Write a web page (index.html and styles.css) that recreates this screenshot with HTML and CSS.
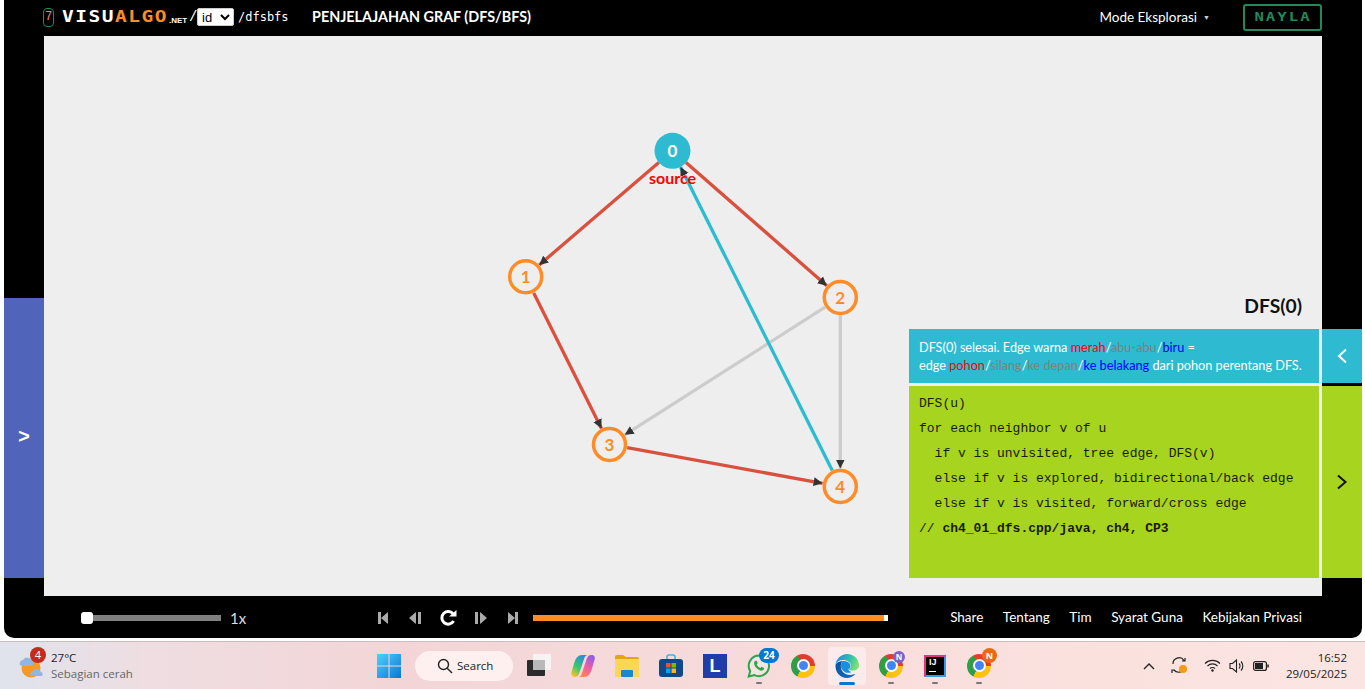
FILE: index.html
```html
<!DOCTYPE html>
<html lang="id">
<head>
<meta charset="utf-8">
<title>VisuAlgo - DFS/BFS</title>
<link rel="stylesheet" href="styles.css">
</head>
<body>
<div class="app">
  <header class="top">
    <span class="ver">7</span>
    <a class="logo"><span class="logo-in"><span class="w">VISU</span><span class="o">ALGO</span></span></a>
    <span class="net">.NET</span>
    <span class="slash">/</span>
    <select class="lang"><option>id</option></select>
    <span class="path">/dfsbfs</span>
    <span class="title">PENJELAJAHAN GRAF (DFS/BFS)</span>
    <span class="mode">Mode Eksplorasi</span>
    <span class="caret">▼</span>
    <span class="user"><span class="user-in">NAYLA</span></span>
  </header>
  <div class="middle">
    <div class="side-left"><div class="open-panel">&gt;</div></div>
    <main class="canvas">
      <svg class="graph" width="1278" height="560" viewBox="44 36 1278 560">
        <defs>
          <marker id="arrow" markerUnits="userSpaceOnUse" markerWidth="11" markerHeight="11" refX="9" refY="5.500" orient="auto">
            <path d="M0 1 L9 5.500 L0 10 Z" fill="#333"/>
          </marker>
        </defs>
        <g class="edges">
          <line class="e red" x1="658.8" y1="162.5" x2="539.2" y2="265"/>
          <line class="e red" x1="686" y1="162.6" x2="826.8" y2="285.7"/>
          <line class="e red" x1="533.7" y1="293" x2="601.5" y2="428.4"/>
          <line class="e grey" x1="825.1" y1="307.2" x2="624.7" y2="434.8"/>
          <line class="e grey" x1="840.3" y1="315.5" x2="840.3" y2="468.5"/>
          <line class="e red" x1="627.2" y1="447.7" x2="822.6" y2="483.3"/>
          <line class="e blue" x1="832.3" y1="470.4" x2="680.5" y2="166.9"/>
        </g>
        <circle class="n on" cx="672.5" cy="150.8" r="18"/>
        <circle class="n" cx="525.7" cy="276.7" r="16"/>
        <circle class="n" cx="840.3" cy="297.5" r="16"/>
        <circle class="n" cx="609.5" cy="444.5" r="16"/>
        <circle class="n" cx="840.3" cy="486.5" r="16"/>
        <text class="nt white" x="672.5" y="156.5">0</text>
        <text class="nt" x="525.7" y="282.5">1</text>
        <text class="nt" x="840.3" y="303.500">2</text>
        <text class="nt" x="609.5" y="450.500">3</text>
        <text class="nt" x="840.3" y="492.500">4</text>
        <text class="src" x="672.5" y="183.5">source</text>
      </svg>
      <h2 class="algo">DFS(0)</h2>
      <section class="panel">
        <div class="status">DFS(0) selesai. Edge warna <span class="c-r">merah</span>/<span class="c-g">abu-abu</span>/<span class="c-b">biru</span> =<br>edge <span class="c-r">pohon</span>/<span class="c-g">silang</span>/<span class="c-g">ke depan</span>/<span class="c-b">ke belakang</span> dari pohon perentang DFS.</div>
        <div class="code">
          <div>DFS(u)</div>
          <div>for each neighbor v of u</div>
          <div class="in">if v is unvisited, tree edge, DFS(v)</div>
          <div class="in">else if v is explored, bidirectional/back edge</div>
          <div class="in">else if v is visited, forward/cross edge</div>
          <div>// <b>ch4_01_dfs.cpp/java, ch4, CP3</b></div>
        </div>
      </section>
    </main>
    <div class="side-right">
      <div class="tab tab-blue"><svg width="12" height="16" viewBox="0 0 12 16"><path d="M10 1.500 L3 8 L10 14.500" fill="none" stroke="#fff" stroke-width="2"/></svg></div>
      <div class="tab tab-green"><svg width="12" height="16" viewBox="0 0 12 16"><path d="M2 1.500 L9.500 8 L2 14.500" fill="none" stroke="#111" stroke-width="2"/></svg></div>
    </div>
  </div>
  <footer class="bottom">
    <div class="speed"><div class="track"><span class="thumb"></span></div><span class="rate">1x</span></div>
    <div class="ctrl">
      <svg width="12" height="14" viewBox="0 0 12 14"><path d="M1 1h3v12H1zM11 1v12L4 7z" fill="#aaa"/></svg>
      <svg width="12" height="14" viewBox="0 0 12 14"><path d="M7 1v12L0 7zM9 1h3v12H9z" fill="#aaa"/></svg>
      <svg width="18" height="18" viewBox="0 0 18 18"><path d="M14.300 5.200A6.300 6.300 0 1 0 14.600 12" fill="none" stroke="#fff" stroke-width="3"/><path d="M10 7.500h7.500V1z" fill="#fff"/></svg>
      <svg width="12" height="14" viewBox="0 0 12 14"><path d="M0 1h3v12H0zM5 1v12l7-6z" fill="#aaa"/></svg>
      <svg width="12" height="14" viewBox="0 0 12 14"><path d="M1 1v12l7-6zM8 1h3v12H8z" fill="#aaa"/></svg>
    </div>
    <div class="progress"><span class="tick"></span></div>
    <nav class="links"><a>Share</a><a>Tentang</a><a>Tim</a><a>Syarat Guna</a><a>Kebijakan Privasi</a></nav>
  </footer>
</div>

<div class="taskbar">
  <div class="weather">
    <svg class="sun" width="26" height="26" viewBox="0 0 26 26">
      <circle cx="13" cy="15" r="9.500" fill="#f59a23"/>
      <path d="M2 12a3.500 3.500 0 0 1 3-5 5 5 0 0 1 9 1 3 3 0 0 1 0 5H4z" fill="#8fb6e6"/>
      <path d="M13 23a3 3 0 0 1 2-5 4.500 4.500 0 0 1 8 1 2.400 2.400 0 0 1 1 4z" fill="#8fb6e6"/>
    </svg>
    <span class="wbadge">4</span>
    <div class="wtext"><div>27°C</div><div class="wsub">Sebagian cerah</div></div>
  </div>
  <div class="apps">
    <div class="slot"><svg width="24" height="24" viewBox="0 0 24 24"><defs><linearGradient id="win" x1="0" y1="0" x2="1" y2="1"><stop offset="0" stop-color="#4fd0fb"/><stop offset="1" stop-color="#0b76d1"/></linearGradient></defs><path d="M0 0h11.500v11.500H0zM12.500 0H24v11.500H12.500zM0 12.500h11.500V24H0zM12.500 12.500H24V24H12.500z" fill="url(#win)"/></svg></div>
    <div class="search"><svg width="16" height="16" viewBox="0 0 16 16"><circle cx="6.500" cy="6.500" r="5" fill="none" stroke="#222" stroke-width="1.400"/><path d="M10.200 10.200L15 15" stroke="#222" stroke-width="1.400"/></svg><span>Search</span></div>
    <div class="slot tv"><svg width="24" height="24" viewBox="0 0 24 24"><rect x="0" y="6" width="18" height="16" rx="1" fill="#2b2b2b"/><rect x="6" y="0" width="18" height="16" rx="1" fill="#f7f4f4" opacity=".95"/><rect x="6" y="6" width="12" height="10" fill="#b9b9b9"/></svg></div>
    <div class="slot"><svg width="24" height="22" viewBox="0 0 24 22"><defs><linearGradient id="cop1" x1=".2" y1="1" x2=".8" y2="0"><stop offset="0" stop-color="#f7c531"/><stop offset=".4" stop-color="#38c96a"/><stop offset="1" stop-color="#2a86e8"/></linearGradient><linearGradient id="cop2" x1=".2" y1="1" x2=".8" y2="0"><stop offset="0" stop-color="#8a5cf0"/><stop offset=".5" stop-color="#ee5ca8"/><stop offset="1" stop-color="#f78c4a"/></linearGradient></defs><path d="M11 0h5.500c-1.500 0-2.500 1-3.500 4L9 16c-1 3-2 6-5 6H3c-2 0-3.500-2-2.500-5l3-10C5 3 7 0 11 0z" fill="url(#cop1)"/><path d="M11 0h5.500c-1.500 0-2.500 1-3.500 4L9 16c-1 3-2 6-5 6H3c-2 0-3.500-2-2.500-5l3-10C5 3 7 0 11 0z" fill="url(#cop2)" transform="rotate(180 12 11)"/></svg></div>
    <div class="slot"><svg width="24" height="22" viewBox="0 0 24 22"><path d="M0 2q0-2 2-2h6l3 2h11q2 0 2 2v2H0z" fill="#e5a50d"/><path d="M0 4h24v18H0z" fill="#fcd656"/><rect x="6" y="15" width="12" height="7" rx="1" fill="#1c86cf"/></svg></div>
    <div class="slot"><svg width="24" height="24" viewBox="0 0 24 24"><path d="M8 5V3q0-2 2-2h4q2 0 2 2v2" fill="none" stroke="#39b6ea" stroke-width="1.600"/><rect y="5" width="24" height="18" rx="3" fill="#10498a"/><path d="M7 9h4.500v4.500H7z" fill="#f25022"/><path d="M12.500 9H17v4.500h-4.500z" fill="#7fba00"/><path d="M7 14.500h4.500V19H7z" fill="#00a4ef"/><path d="M12.500 14.500H17V19h-4.500z" fill="#ffb900"/></svg></div>
    <div class="slot"><span class="lapp">L</span></div>
    <div class="slot"><svg width="24" height="24" viewBox="0 0 24 24"><path d="M12 1.500a10.300 10.300 0 0 0-8.800 15.600L1.700 22.500l5.600-1.400A10.300 10.300 0 1 0 12 1.500z" fill="#f4e3e0" stroke="#2aa64a" stroke-width="2"/><path d="M8 7c-1.500 1.500-1 4 1 6.500s5 3.500 6.500 3c1.500-.5 2-2 1.500-2.500l-2.500-1.200-1 1.200c-1 0-3.500-2.300-3.800-3.700l1-1-1-2.500z" fill="#2aa64a"/></svg><span class="bdg b24">24</span><i class="dot"></i></div>
    <div class="slot"><span class="chrome"></span></div>
    <div class="slot active"><svg width="24" height="24" viewBox="0 0 24 24"><defs><linearGradient id="edgeA" x1="0" y1=".3" x2="1" y2=".6"><stop offset="0" stop-color="#1a8fdc"/><stop offset=".55" stop-color="#2fc0b0"/><stop offset="1" stop-color="#86e36c"/></linearGradient><linearGradient id="edgeB" x1="0" y1="0" x2=".7" y2="1"><stop offset="0" stop-color="#0a4f99"/><stop offset="1" stop-color="#0d6fc4"/></linearGradient></defs><path d="M.5 11C1 5 6 0 12 0c7 0 12 5 12 11.500 0 3.500-3 5-5.500 5s-4.500-.5-5-1.500c2.500-1 3-3 2-5C14.500 7.500 11 6 8 6c-4 0-6.500 2-7.500 5z" fill="url(#edgeA)"/><path d="M.5 11C2 8 5 7 8 7c-2 1-2.500 4-2 7 1 5 6 8 12 6.500l2.500-.5C18 22.500 15 24 12 24 5 24 0 18 .5 11z" fill="url(#edgeB)"/><path d="M8 7c3-.5 6 1 7 3s.5 4-1.500 5c-.5 1 1 2.500 3 3-3 1.500-6 1-8-1-2-2-3-4-2.500-6.500C6.200 8.700 7 7.500 8 7z" fill="#1c8fdc"/></svg><i class="bar"></i></div>
    <div class="slot"><span class="chrome"></span><span class="bdg bn">N</span><i class="dot"></i></div>
    <div class="slot"><span class="ij"><b>IJ</b></span><i class="dot"></i></div>
    <div class="slot"><span class="chrome"></span><span class="bdg bo">N</span><i class="dot"></i></div>
  </div>
  <div class="tray">
    <svg width="12" height="8" viewBox="0 0 12 8"><path d="M1 7L6 2l5 5" fill="none" stroke="#222" stroke-width="1.400"/></svg>
    <svg class="t2" width="17" height="17" viewBox="0 0 17 17"><path d="M2 7A6 6 0 0 1 13 3.500M14 1v3h-3M13 12A6 6 0 0 1 3 13M1 16v-3h3" fill="none" stroke="#222" stroke-width="1.200"/><circle cx="12" cy="12" r="4" fill="#f59a12"/></svg>
    <svg class="t2" width="17" height="13" viewBox="0 0 17 13"><path d="M1 4.500a10.500 10.500 0 0 1 15 0M3.500 7a7 7 0 0 1 10 0M6 9.500a3.500 3.500 0 0 1 5 0" fill="none" stroke="#222" stroke-width="1.100"/><circle cx="8.500" cy="11.500" r="1.200" fill="#222"/></svg>
    <svg class="t1" width="16" height="14" viewBox="0 0 16 14"><path d="M1 4.500h2.500L7.500 1v12L3.500 9.500H1z" fill="none" stroke="#222" stroke-width="1.100"/><path d="M10 4.500a3.500 3.500 0 0 1 0 5M12 2.500a6.500 6.500 0 0 1 0 9" fill="none" stroke="#222" stroke-width="1.100"/></svg>
    <svg class="t1" width="16" height="10" viewBox="0 0 16 10"><rect x=".6" y=".6" width="12.800" height="8.800" rx="2" fill="none" stroke="#222" stroke-width="1.200"/><rect x="2" y="2" width="8" height="6" fill="#222"/><rect x="14.300" y="3.500" width="1.500" height="3" fill="#222"/></svg>
    <div class="clock"><div>16:52</div><div>29/05/2025</div></div>
  </div>
</div>
</body>
</html>
```
FILE: styles.css
```css
* { box-sizing: border-box; }
html, body { margin: 0; height: 689px; overflow: hidden; background: #fff; }
body { font-family: Lato, "Noto Sans", sans-serif; }

.app { width: 1358px; height: 638px; margin-left: 4px; background: #000; border-radius: 0 0 10px 10px; display: flex; flex-direction: column; overflow: hidden; color: #fff; }

.top { height: 36px; flex: none; display: flex; align-items: center; padding: 0 40px 2px 39px; }
.ver { width: 11px; height: 19px; border: 1px solid #1f8a5a; border-radius: 4px; color: #ff8c27; font: 12px/17px "Liberation Mono", monospace; text-align: center; }
.logo { margin-left: 8px; width: 107px; font: 15px/1 "DejaVu Sans Mono", monospace; white-space: nowrap; }
.logo-in { display: inline-block; letter-spacing: 1.16px; transform: scaleX(1.3); transform-origin: 0 50%; font-weight: 700; }
.logo .o { color: #ff8c27; }
.net { font: bold 8px/1 "Liberation Sans", sans-serif; margin-top: 7px; width: 20px; }
.slash { font: 14px/1 "Liberation Mono", monospace; width: 8px; }
.lang { width: 37px; height: 18px; padding: 0; border: 1px solid #ccc; border-radius: 2px; background: #fff; color: #000; font: 13px "Liberation Sans", sans-serif; }
.path { margin-left: 4px; width: 74px; font: 12px/1 "DejaVu Sans Mono", monospace; }
.title { font-weight: 700; font-size: 14.35px; white-space: nowrap; margin-bottom: 1px; }
.mode { margin-left: auto; font-size: 13.5px; margin-bottom: 1px; }
.caret { font-size: 7px; margin-left: 6px; color: #ccc; }
.user { margin-left: 33px; width: 79px; height: 27px; border: 2px solid #1f8a5a; border-radius: 3px; color: #1f8a5a; font: bold 12px/23px "DejaVu Sans Mono", monospace; text-align: center; }
.user-in { display: inline-block; letter-spacing: 1.57px; transform: scaleX(1.3); }

.middle { height: 560px; flex: none; display: flex; }
.side-left { width: 40px; flex: none; padding-top: 262px; }
.open-panel { height: 280px; background: #5065ba; color: #fff; font: bold 20px/280px "Liberation Mono", monospace; text-align: center; }
.canvas { width: 1278px; flex: none; background: #eee; position: relative; }
.graph { position: absolute; left: 0; top: 0; }
.e { stroke-width: 3.3; marker-end: url(#arrow); }
.red { stroke: #d9503f; }
.grey { stroke: #ccc; }
.blue { stroke: #2ebbd1; }
.n { fill: #eee; stroke: #ff8c27; stroke-width: 3.5; }
.n.on { fill: #2ebbd1; stroke: none; }
.nt { font: bold 17px Lato, sans-serif; fill: #ff8c27; text-anchor: middle; }
.nt.white { fill: #fff; }
.src { font: bold 16px Lato, sans-serif; fill: #f00; text-anchor: middle; }
.algo { position: absolute; right: 20px; top: 259px; margin: 0; color: #111; font-size: 19.3px; line-height: 22px; font-weight: 700; }
.panel { position: absolute; left: 865px; bottom: 18px; width: 410px; display: flex; flex-direction: column; gap: 3px; }
.status { height: 54px; background: #2ebbd1; padding: 9px 10px; color: #fff; font-size: 12.7px; line-height: 18px; white-space: nowrap; }
.c-r { color: #f00; }
.c-g { color: #808080; }
.c-b { color: #00f; }
.code { height: 192px; background: #a7d41e; padding: 5px 10px; color: #1a1a00; font: 13px/25px "Liberation Mono", monospace; }
.code div { white-space: pre; }
.code .in { padding-left: 15.6px; }
.side-right { width: 40px; flex: none; padding-top: 293px; display: flex; flex-direction: column; gap: 3px; }
.tab { display: flex; align-items: center; justify-content: center; }
.tab-blue { height: 54px; background: #2ebbd1; }
.tab-green { height: 192px; background: #a7d41e; }

.bottom { height: 42px; flex: none; display: flex; align-items: center; padding: 2px 60px 0 77px; }
.speed { width: 286px; flex: none; display: flex; align-items: center; }
.track { width: 140px; height: 6px; background: #808080; position: relative; }
.thumb { position: absolute; left: 0; top: -3px; width: 12px; height: 12px; background: #fff; border-radius: 3px; }
.rate { margin-left: 9px; font-size: 15px; color: #ddd; }
.ctrl { width: 162px; flex: none; display: grid; grid-template-columns: 32px 32px 34px 32px 32px; justify-items: center; align-items: center; }
.progress { width: 355px; height: 6px; margin-left: 4px; background: #ff8c27; display: flex; justify-content: flex-end; }
.tick { width: 4px; background: #fff; }
.links { margin-left: auto; margin-bottom: 2px; display: flex; gap: 19.5px; font-size: 13.5px; white-space: nowrap; }

.taskbar { height: 48px; margin-top: 3px; border-top: 1px solid #c9bdbd; display: flex; align-items: center; color: #222; font-family: "Open Sans", "Noto Sans", sans-serif; font-size: 11.5px; background: linear-gradient(90deg, #dfe3ec 0, #efdde1 150px, #f3d5d7 400px, #f9dedc 900px, #fbe5e2 100%); }
.weather { width: 366.5px; flex: none; display: flex; align-items: center; padding-left: 18px; position: relative; }
.sun { flex: none; }
.wbadge { position: absolute; left: 30px; top: -3px; width: 16px; height: 16px; border-radius: 50%; background: #c42b1c; color: #fff; font-size: 11px; line-height: 16px; text-align: center; }
.wtext { margin-left: 7px; line-height: 16px; }
.wsub { color: #666; }
.apps { display: flex; align-items: center; }
.slot { width: 44px; height: 38px; flex: none; display: flex; align-items: center; justify-content: center; position: relative; }
.search { width: 98px; height: 30px; margin: 0 4px 0 4.5px; border-radius: 15px; background: #fdf0ef; display: flex; align-items: center; gap: 4px; padding-left: 22px; font-size: 11.5px; }
.lapp { width: 24px; height: 24px; background: #1f3da8; color: #fff; font: bold 18px/24px "Liberation Sans", sans-serif; text-align: center; }
.chrome { width: 24px; height: 24px; border-radius: 50%; background: conic-gradient(from 330deg, #e33b2e 0 120deg, #fbc116 120deg 240deg, #2f9e44 240deg 360deg); display: flex; align-items: center; justify-content: center; }
.chrome::after { content: ""; width: 9px; height: 9px; border-radius: 50%; background: #3f86f2; box-shadow: 0 0 0 2px #fff; }
.ij { width: 22px; height: 22px; background: #000; border: 2px solid; border-color: #e5317f #2f9cf0 #2f9cf0 #e5317f; color: #fff; font: bold 9px/11px "Liberation Sans", sans-serif; padding-left: 3px; position: relative; }
.ij::after { content: ""; position: absolute; left: 3px; bottom: 3px; width: 7px; height: 1px; background: #fff; }
.ij b { display: block; }
.active { background: #fdeaea; width: 38px; margin: 0 3px; border-radius: 4px; }
.bar { position: absolute; left: 11px; bottom: 0; width: 16px; height: 3px; border-radius: 2px; background: #0078d4; }
.dot { position: absolute; left: 19px; bottom: 1px; width: 6px; height: 2px; border-radius: 1px; background: #777; }
.bdg { position: absolute; border-radius: 50%; color: #fff; text-align: center; font-weight: 700; }
.b24 { left: 22px; top: 1px; width: 20px; height: 15px; border-radius: 8px; background: #0078d4; font-size: 10px; line-height: 15px; }
.bn { left: 24px; top: 4px; width: 12px; height: 12px; background: #7a63c9; font-size: 8px; line-height: 12px; }
.bo { left: 25px; top: 1px; width: 15px; height: 15px; background: #ea6a12; font-size: 9px; line-height: 15px; }
.tray { flex: 1; display: flex; align-items: center; padding-left: 142px; padding-right: 18px; }
.t2 { margin-left: 16px; }
.t1 { margin-left: 8px; }
.clock { margin-left: auto; text-align: right; line-height: 16px; font-size: 11.5px; }
```
